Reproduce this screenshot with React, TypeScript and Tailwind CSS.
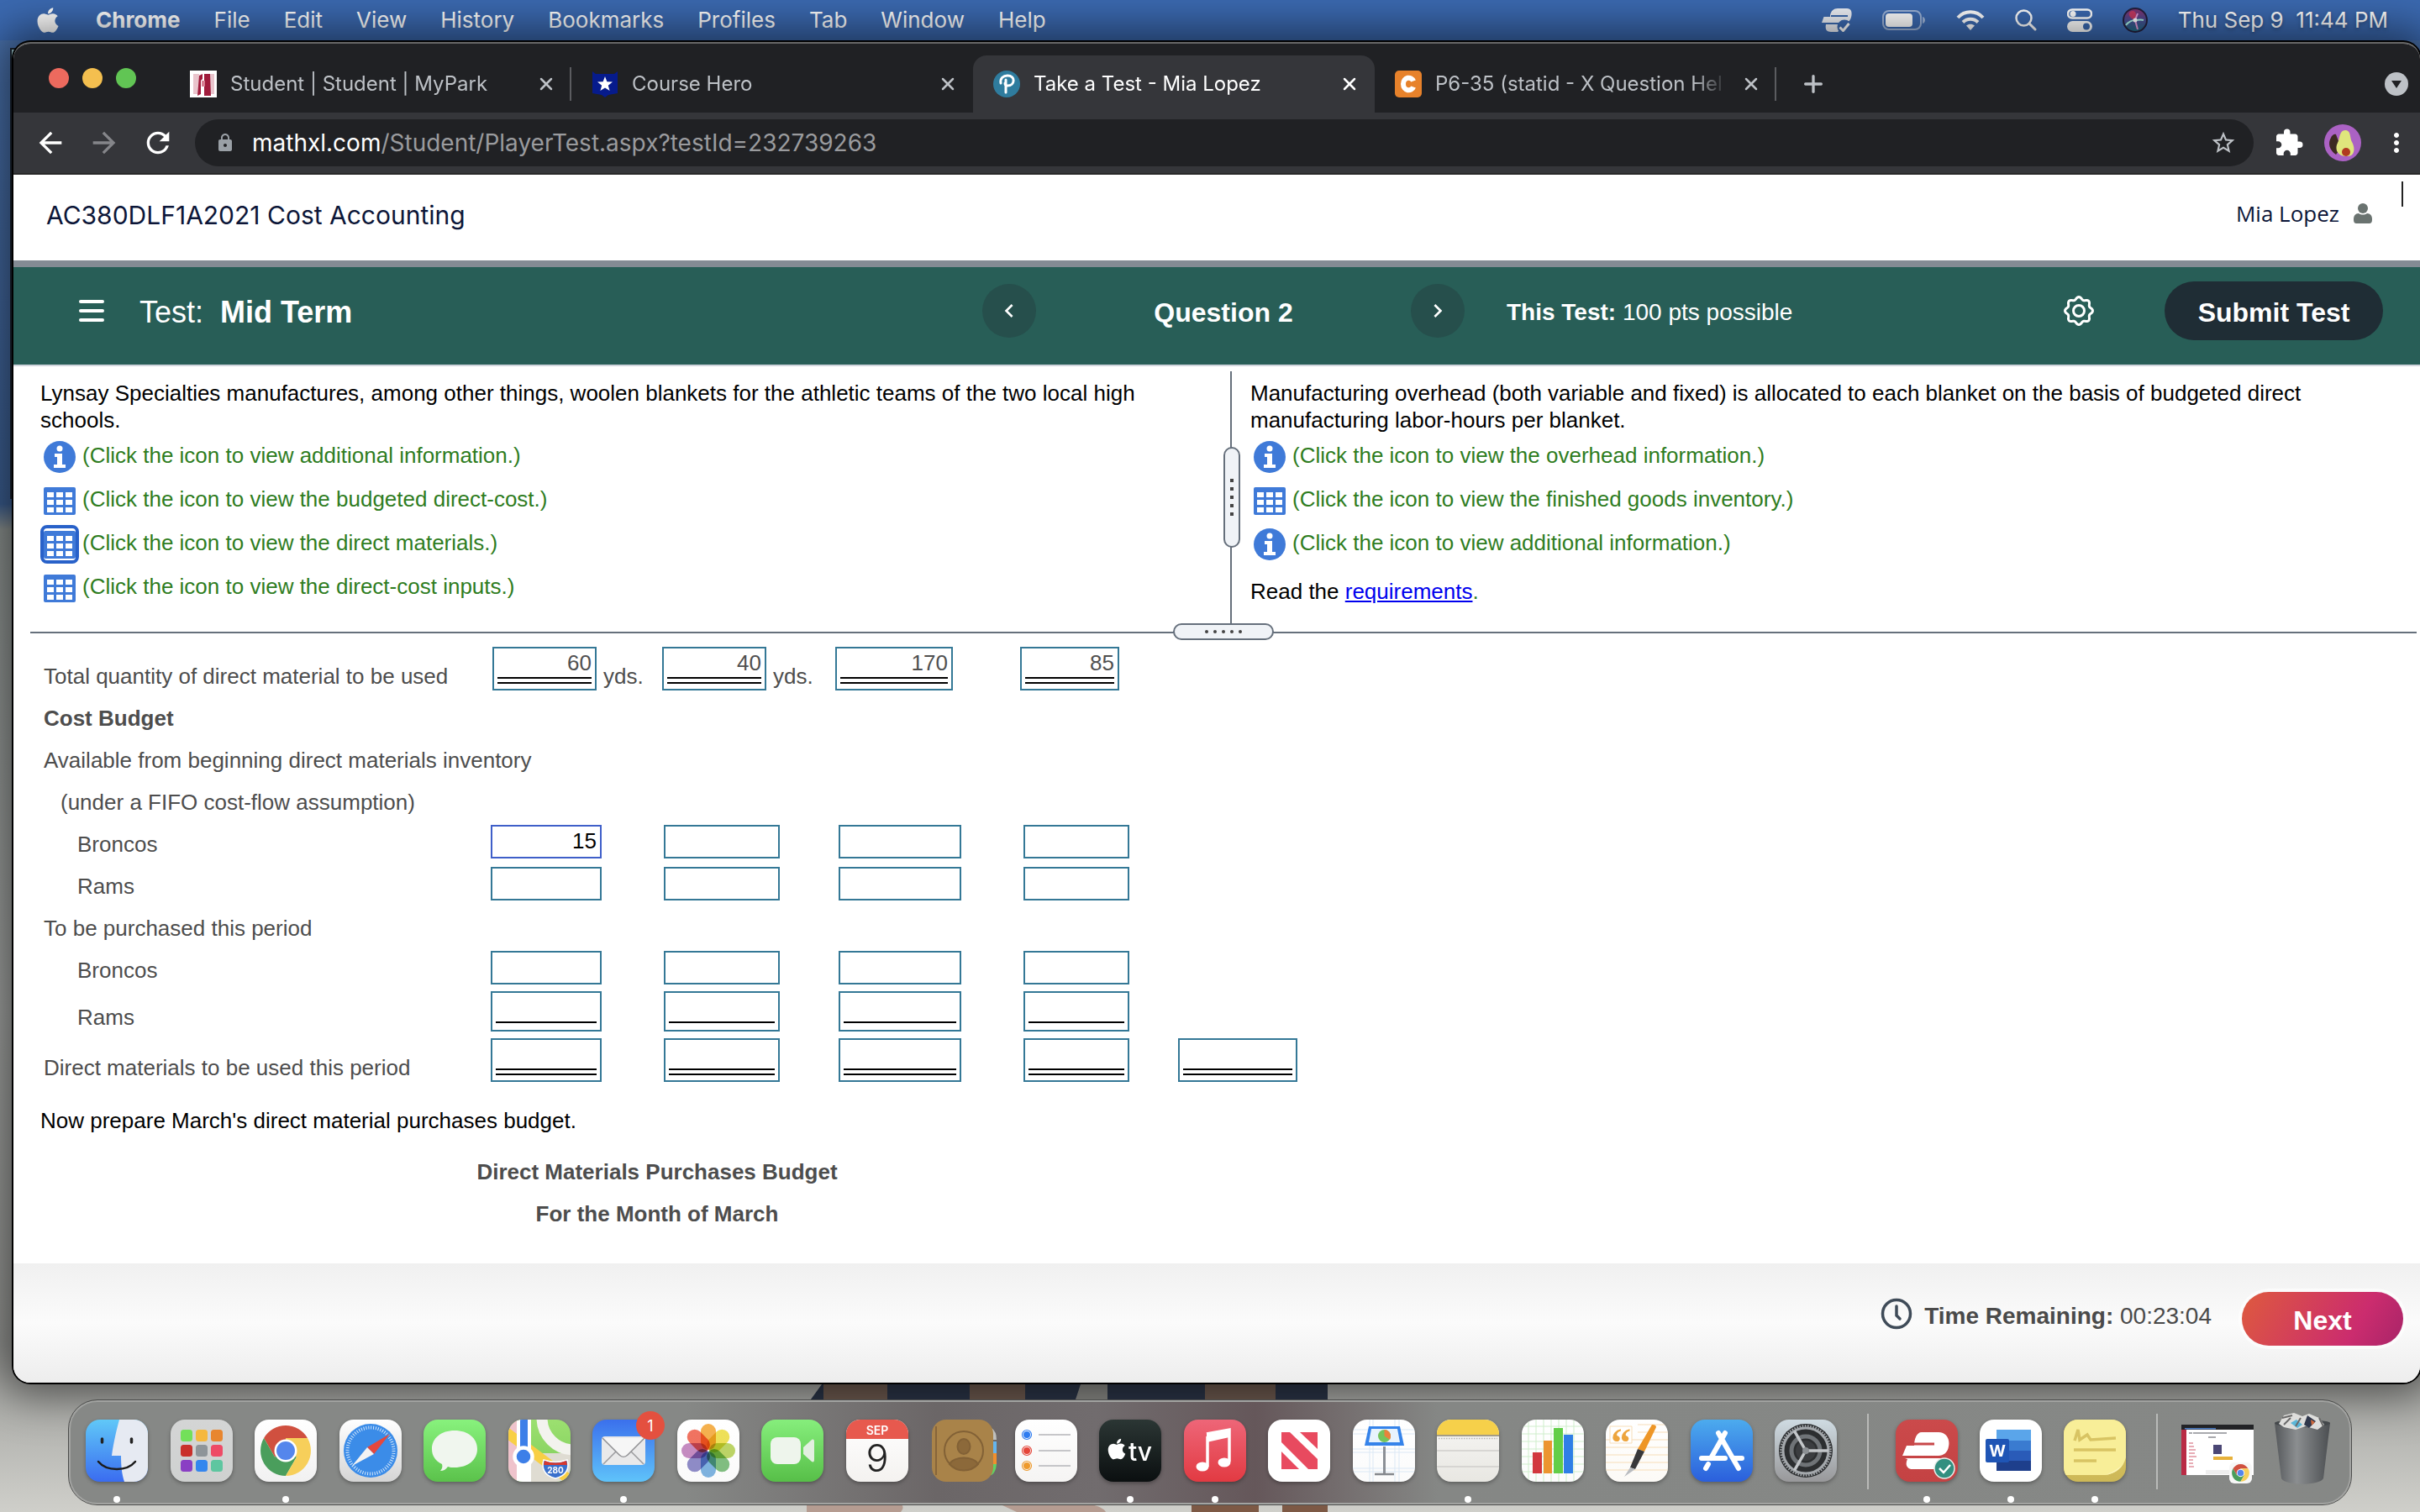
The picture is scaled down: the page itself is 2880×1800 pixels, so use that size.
import React from 'react';
import { X, Plus } from 'lucide-react';
import { FaApple } from 'react-icons/fa';
import {
  MdArrowBack,
  MdArrowForward,
  MdRefresh,
  MdLock,
  MdStarBorder,
  MdExtension,
  MdMoreVert,
  MdChevronLeft,
  MdChevronRight,
} from 'react-icons/md';

const menuItems = ['File', 'Edit', 'View', 'History', 'Bookmarks', 'Profiles', 'Tab', 'Window', 'Help'];

/* ---------- menu bar ---------- */

const MenuBar: React.FC = () => (
  <header className="relative flex h-12 items-center justify-between bg-[#3b69b0] pl-11 pr-[38px] font-[Inter,sans-serif] text-[26px] leading-8 text-white [text-shadow:0_2px_4px_rgba(0,0,0,0.3)]">
    <nav className="flex items-center gap-10">
      <FaApple className="mr-1 h-[34px] w-[26px]" />
      <button className="font-bold">Chrome</button>
      {menuItems.map((item) => (
        <button key={item}>{item}</button>
      ))}
    </nav>
    <div className="flex items-center gap-9">
      <svg className="h-7 w-9" viewBox="0 0 36 28" fill="#eef1f7">
        <path d="M10 8C11 3 14 0 19 0h11c5 0 6 4 5.500 8-.5 5-3 9-8.500 9H0l2.500-7H10z" />
        <path d="M5 19h22l-8 9h-8c-6 0-7-4-6-9z" />
        <path d="M11 9h20" stroke="#3b69b0" strokeWidth="2" />
        <circle cx="27" cy="22" r="8.500" fill="#3b69b0" />
        <path d="m21.500 22.500 4 4 7-8.500" fill="none" stroke="#fff" strokeWidth="3" />
      </svg>
      <svg className="h-6 w-[52px]" viewBox="0 0 52 24">
        <rect x="1" y="1" width="45" height="22" rx="7" fill="none" stroke="#fff" strokeOpacity=".5" strokeWidth="2" />
        <rect x="4" y="4" width="32" height="16" rx="4" fill="#fff" />
        <path d="M48 8c4 1 4 7 0 8z" fill="#fff" fillOpacity=".5" />
      </svg>
      <svg className="h-6 w-[34px]" viewBox="0 0 34 24" fill="none" stroke="#fff" strokeWidth="4">
        <path d="M2 9C10 0 24 0 32 9" />
        <path d="M8 14.500c5-5 13-5 18 0" />
        <path d="M17 24l-5-5.500c3-2.500 7-2.500 10 0z" fill="#fff" stroke="none" />
      </svg>
      <svg className="h-[26px] w-[26px]" viewBox="0 0 26 26" fill="none" stroke="#fff" strokeWidth="2.500" strokeLinecap="round">
        <circle cx="10.500" cy="10.500" r="9" />
        <path d="m17 17 7 7" strokeWidth="3" />
      </svg>
      <svg className="h-[28px] w-[30px]" viewBox="0 0 30 28">
        <rect x="1" y="1.500" width="28" height="10" rx="5" fill="none" stroke="#fff" strokeWidth="2.500" />
        <circle cx="7" cy="6.500" r="3.500" fill="#fff" />
        <rect x="0" y="15" width="30" height="13" rx="6.500" fill="#fff" />
        <circle cx="23" cy="21.500" r="4" fill="#3b69b0" />
      </svg>
      <svg className="size-[30px]" viewBox="0 0 30 30">
        <defs>
          <linearGradient id="siri" x2="0" y2="1">
            <stop stopColor="#8a2f6b" />
            <stop offset=".5" stopColor="#4a4c94" />
            <stop offset="1" stopColor="#1e6f86" />
          </linearGradient>
        </defs>
        <circle cx="15" cy="15" r="14" fill="url(#siri)" stroke="#241f3d" strokeWidth="2" />
        <path d="M15 15C8 12 6 8 9 5c6-3 9 2 6 10Z" fill="#c23a62" />
        <path d="M4 21c3-4 8-6 11-6s7-1 10 0" stroke="#a9f3e4" strokeWidth="2" fill="none" />
        <path d="m15 15 3-8M15 15l3 11" stroke="#e79bd8" strokeWidth="2" />
        <circle cx="15" cy="15" r="2.500" fill="#fff" />
      </svg>
      <span className="whitespace-pre">Thu Sep 9  11:44 PM</span>
    </div>
  </header>
);

/* ---------- browser chrome ---------- */

type Tab = { title: string; icon: React.ReactNode; active?: boolean; divider?: boolean };

const tabs: Tab[] = [
  {
    title: 'Student | Student | MyPark',
    divider: true,
    icon: (
      <svg className="size-8" viewBox="0 0 32 32">
        <path fill="#fff" d="M0 0h32v32H0z" />
        <path fill="#e9c4cc" d="M4 4h7v24H4zM24 4h5v24h-5z" />
        <path fill="#a01c3c" d="M17 4h7l1 26h-8zM11 6l4-2v6l-2 2v16l-4 2z" />
        <path fill="#d77f92" d="M14 12h4v7h-4z" />
      </svg>
    ),
  },
  {
    title: 'Course Hero',
    icon: (
      <svg className="size-8" viewBox="0 0 32 32">
        <path fill="#061b8c" d="M1 1l4 3h22l4-3v26l-11 2-4 3-4-3-11-2z" />
        <path fill="#fff" d="m16 7 2.400 6.300 6.600.3-5.200 4.100 1.800 6.300-5.600-3.600-5.600 3.600 1.800-6.300L7 13.600l6.600-.3z" />
      </svg>
    ),
  },
  {
    title: 'Take a Test - Mia Lopez',
    active: true,
    icon: (
      <svg className="size-8" viewBox="0 0 32 32">
        <circle cx="16" cy="16" r="16" fill="#2f7c9e" />
        <path d="M9 15c-1-6 3-9 8-9 10 0 9 12 0 12-2 0-3-1-3-3M15 11v15" fill="none" stroke="#fff" strokeWidth="3" strokeLinecap="round" />
      </svg>
    ),
  },
  {
    title: 'P6-35 (statid - X Question Hel',
    divider: true,
    icon: (
      <svg className="size-8" viewBox="0 0 32 32">
        <rect width="32" height="32" rx="5" fill="#e7822b" />
        <path d="M22 12.500c-2-6-12-5-12 3.500s10 9.500 12 3.500" fill="none" stroke="#fff" strokeWidth="6" />
      </svg>
    ),
  },
];

const TabStrip: React.FC = () => (
  <div className="flex h-[82px] items-center bg-[#202124] pl-[42px] pr-3 font-[Inter,sans-serif]">
    <div className="mr-10 flex gap-4">
      <button aria-label="Close window" className="size-6 rounded-full bg-[#ed6a5e]" />
      <button aria-label="Minimize window" className="size-6 rounded-full bg-[#f4bf4f]" />
      <button aria-label="Zoom window" className="size-6 rounded-full bg-[#61c554]" />
    </div>
    {tabs.map((tab) => (
      <div
        key={tab.title}
        className={
          tab.active
            ? 'mt-3.5 flex h-[68px] max-w-[478px] flex-1 items-center gap-4 rounded-t-2xl bg-[#35363a] pl-6 pr-[18px] text-white'
            : 'relative mt-3.5 flex h-[68px] max-w-[478px] flex-1 items-center gap-4 pl-6 pr-[18px] text-[#bdc1c6]'
        }
      >
        <span className="shrink-0">{tab.icon}</span>
        <span className="flex-1 overflow-hidden whitespace-nowrap text-2xl [mask-image:linear-gradient(to_right,#000_88%,transparent)]">
          {tab.title}
        </span>
        <button aria-label={`Close ${tab.title}`}>
          <X className="size-6" strokeWidth={2.5} />
        </button>
        {tab.divider && <span className="absolute right-0 h-10 w-0.5 bg-[#5b5c60]" />}
      </div>
    ))}
    <button aria-label="New tab" className="ml-7 mt-3.5 text-[#bdc1c6]">
      <Plus className="size-8" strokeWidth={2.5} />
    </button>
    <button aria-label="Search tabs" className="ml-auto mt-3.5">
      <svg className="size-8" viewBox="0 0 32 32">
        <circle cx="16" cy="16" r="14" fill="#bdc1c6" />
        <path d="M10 12h12l-6 9z" fill="#202124" />
      </svg>
    </button>
  </div>
);

const Toolbar: React.FC = () => (
  <div className="flex h-[74px] items-center gap-6 border-b-2 border-[#282828] bg-[#35363a] pl-6 pr-2.5 font-[Inter,sans-serif] text-white">
    <button aria-label="Back"><MdArrowBack className="size-10" /></button>
    <button aria-label="Forward" className="text-[#85868a]"><MdArrowForward className="size-10" /></button>
    <button aria-label="Reload"><MdRefresh className="size-10" /></button>
    <div className="flex h-14 flex-1 items-center gap-5 rounded-full bg-[#202124] pl-6 pr-5">
      <MdLock className="size-6 text-[#9aa0a6]" />
      <a href="#url" className="flex-1 text-[28px] leading-9 text-[#9a9b9e]">
        <span className="text-white">mathxl.com</span>/Student/PlayerTest.aspx?testId=232739263
      </a>
      <button aria-label="Bookmark" className="text-[#bdc1c6]"><MdStarBorder className="size-8" /></button>
    </div>
    <button aria-label="Extensions"><MdExtension className="size-9" /></button>
    <button aria-label="Profile">
      <svg className="size-11" viewBox="0 0 44 44">
        <circle cx="22" cy="22" r="22" fill="#ab62c4" />
        <path d="M8 16c-4 6-2 15 6 20l6-8-6-16c-2-1-5 1-6 4z" fill="#3c2a22" />
        <path d="M25 7c7 0 5 8 8 14 4 7 4 18-7 17-10 0-14-8-10-16 3-6 2-15 9-15z" fill="#dfe67c" />
        <ellipse cx="26" cy="33" rx="5" ry="5" fill="#b03a1f" />
      </svg>
    </button>
    <button aria-label="More"><MdMoreVert className="size-9" /></button>
  </div>
);

/* ---------- course header ---------- */

const lobes = Array.from({ length: 97 }, (_, i) => {
  const a = (i / 96) * Math.PI * 2;
  const r = 15 + 1.5 * Math.cos(8 * a);
  return `${i ? 'L' : 'M'}${(18 + r * Math.cos(a)).toFixed(2)} ${(18 + r * Math.sin(a)).toFixed(2)}`;
}).join('');

const CourseHeader: React.FC = () => (
  <div className="flex h-[102px] justify-between pl-[39px] text-[#0c1638]">
    <h1 className="mt-7 font-[Inter,sans-serif] text-[30px] leading-10">AC380DLF1A2021 Cost Accounting</h1>
    <div className="flex gap-4">
      <span className="mt-[26px] font-['Open_Sans',sans-serif] text-[26px] leading-10">Mia Lopez</span>
      <svg className="mt-[34px] h-6 w-6" viewBox="0 0 24 24" fill="#6a7370">
        <ellipse cx="12" cy="6" rx="6" ry="6" />
        <path d="M7 12c3 2 7 2 10 0 4 0 6 3 6 7 0 4-1 5-4 5H5c-3 0-4-1-4-5s2-7 6-7z" />
      </svg>
      <span className="ml-[18px] mr-5 mt-2 h-[30px] w-0.5 bg-[#222]" />
    </div>
  </div>
);

const TestBar: React.FC = () => (
  <div className="grid h-[126px] grid-cols-[1fr_auto_1fr] items-center border-b-2 border-t-8 border-b-[#d0d5dc] border-t-[#848b94] bg-[#285e57] pb-2 pl-4 text-white">
    <div className="flex items-center pl-[62px]">
      <button aria-label="Menu" className="mb-1 flex w-[30px] flex-col gap-[7px]">
        <span className="h-1 rounded-sm bg-white" />
        <span className="h-1 rounded-sm bg-white" />
        <span className="h-1 rounded-sm bg-white" />
      </button>
      <h2 className="ml-[42px] whitespace-pre text-4xl">
        Test:  <b>Mid Term</b>
      </h2>
    </div>
    <div className="flex w-[574px] items-center justify-between pb-1">
      <button aria-label="Previous question" className="grid size-16 place-items-center rounded-full bg-[#264f4c]">
        <MdChevronLeft className="size-8" stroke="currentColor" />
      </button>
      <h3 className="pt-1 text-[32px] font-bold leading-9">Question 2</h3>
      <button aria-label="Next question" className="grid size-16 place-items-center rounded-full bg-[#264f4c]">
        <MdChevronRight className="size-8" stroke="currentColor" />
      </button>
    </div>
    <div className="flex items-center pb-1 pl-[50px] pr-11">
      <p className="flex-1 pt-1 text-[28px] leading-9"><b>This Test:</b> 100 pts possible</p>
      <button aria-label="Settings">
        <svg className="size-9" viewBox="0 0 36 36" fill="none" stroke="#fff" strokeWidth="3" strokeLinejoin="round">
          <path d={`${lobes}Z`} />
          <circle cx="18" cy="18" r="6.500" />
        </svg>
      </button>
      <button className="ml-[84px] h-[70px] w-[260px] rounded-full bg-[#1f2d35] pt-1 text-[32px] font-bold">Submit Test</button>
    </div>
  </div>
);

/* ---------- question ---------- */

const InfoIcon = () => (
  <svg className="h-[38px] w-[38px]" viewBox="0 0 38 38">
    <circle cx="19" cy="19" r="19" fill="#3f7ad8" />
    <circle cx="19" cy="9" r="3.500" fill="#fff" />
    <path d="M13 15h9v13h4v4H12v-4h4v-9h-3z" fill="#fff" />
  </svg>
);

const TableIcon = () => (
  <svg className="h-[33px] w-[38px]" viewBox="0 0 38 33">
    <rect width="38" height="33" rx="2" fill="#3f7ad8" />
    {[4, 15, 26].map((x) => [6, 15, 24].map((y) => <rect key={`${x}-${y}`} x={x} y={y} width="8" height="6" fill="#fff" />))}
  </svg>
);

type LinkItem = { kind: 'info' | 'table'; text: string; focused?: boolean };

const leftLinks: LinkItem[] = [
  { kind: 'info', text: '(Click the icon to view additional information.)' },
  { kind: 'table', text: '(Click the icon to view the budgeted direct-cost.)' },
  { kind: 'table', text: '(Click the icon to view the direct materials.)', focused: true },
  { kind: 'table', text: '(Click the icon to view the direct-cost inputs.)' },
];

const rightLinks: LinkItem[] = [
  { kind: 'info', text: '(Click the icon to view the overhead information.)' },
  { kind: 'table', text: '(Click the icon to view the finished goods inventory.)' },
  { kind: 'info', text: '(Click the icon to view additional information.)' },
];

const IconLinks: React.FC<{ items: LinkItem[] }> = ({ items }) => (
  <ul>
    {items.map((item) => (
      <li key={item.text} className="flex h-[52px] items-center text-[#2f7d1f]">
        <button
          aria-label={item.text}
          className={
            item.focused
              ? 'mr-1 grid size-[46px] place-items-center rounded-lg border-4 border-[#2861c9]'
              : 'mr-1 grid size-[46px] place-items-center'
          }
        >
          {item.kind === 'info' ? <InfoIcon /> : <TableIcon />}
        </button>
        <span className="pb-1">{item.text}</span>
      </li>
    ))}
  </ul>
);

const QuestionPanes: React.FC = () => (
  <section className="relative grid h-[316px] grid-cols-[1448fr_1416fr] text-[26px] leading-8 text-black">
    <div className="pl-8 pr-16 pt-4">
      <p className="mb-0.5">
        Lynsay Specialties manufactures, among other things, woolen blankets for the athletic teams of the two local high schools.
      </p>
      <IconLinks items={leftLinks} />
    </div>
    <div className="relative pl-6 pr-24 pt-4">
      <span className="absolute bottom-2.5 left-0 top-1.5 w-0.5 bg-[#66707c]" />
      <span className="absolute -left-2 top-24 flex h-[120px] w-5 flex-col items-center justify-center gap-1.5 rounded-full border-2 border-[#66707c] bg-[#f0f3f7]">
        {[0, 1, 2, 3, 4].map((n) => <i key={n} className="size-1 bg-[#444]" />)}
      </span>
      <p className="mb-0.5">
        Manufacturing overhead (both variable and fixed) is allocated to each blanket on the basis of budgeted direct manufacturing labor-hours per blanket.
      </p>
      <IconLinks items={rightLinks} />
      <p className="mt-3.5 text-[#2f7d1f]">
        <span className="text-black">Read the </span>
        <a href="#requirements" className="text-[#0000ee] underline">requirements</a>.
      </p>
    </div>
    <span className="absolute bottom-[-2px] left-5 right-1 h-0.5 bg-[#66707c]" />
    <span className="absolute -bottom-[10px] left-5 right-1 mx-auto flex h-5 w-[120px] items-center justify-center gap-1.5 rounded-[10px] border-2 border-[#66707c] bg-[#f0f3f7]">
      {[0, 1, 2, 3, 4].map((n) => <i key={n} className="size-1 rounded-full bg-[#444]" />)}
    </span>
  </section>
);

/* ---------- budget tables ---------- */

type BoxProps = { label: string; width: string; line?: 'single' | 'double'; value?: string; focused?: boolean };

const Box: React.FC<BoxProps> = ({ label, width, line, value, focused }) => (
  <span
    className={`${width} ${focused ? 'border-[#3f5fc9] text-black' : 'border-[#347896] text-[#505050]'} ${
      line === 'double' ? 'h-[52px]' : line === 'single' ? 'h-12' : 'mt-0.5 h-10'
    } inline-block border-2 bg-white align-top`}
  >
    <input
      aria-label={label}
      defaultValue={value}
      className={`${line ? 'h-[34px]' : 'h-[34px]'} block w-full bg-transparent pr-1 text-right outline-none`}
    />
    {line === 'single' && <span className="mx-1 block h-0.5 bg-black" />}
    {line === 'double' && <span className="mx-1 block h-2 border-y-2 border-black" />}
  </span>
);

const costWidths = ['w-[132px]', 'w-[138px]', 'w-[146px]', 'w-[126px]', 'w-[142px]'];

type Row = { label: string; indent?: string; bold?: boolean; boxes?: number; line?: 'single' | 'double'; first?: string };

const costRows: Row[] = [
  { label: 'Cost Budget', bold: true },
  { label: 'Available from beginning direct materials inventory' },
  { label: '(under a FIFO cost-flow assumption)', indent: 'pl-5' },
  { label: 'Broncos', indent: 'pl-10', boxes: 4, first: '15' },
  { label: 'Rams', indent: 'pl-10', boxes: 4 },
  { label: 'To be purchased this period' },
  { label: 'Broncos', indent: 'pl-10', boxes: 4 },
  { label: 'Rams', indent: 'pl-10', boxes: 4, line: 'single' },
  { label: 'Direct materials to be used this period', boxes: 5, line: 'double' },
];

const quantities = [
  { value: '60', width: 'w-[124px]', unit: 'yds.' },
  { value: '40', width: 'w-[124px]', unit: 'yds.' },
  { value: '170', width: 'w-[140px]', unit: '' },
  { value: '85', width: 'w-[118px]', unit: '' },
];

const BudgetTables: React.FC = () => (
  <section className="flex-1 pl-9 pt-[18px] text-[26px] leading-[50px] text-[#4d4d4d]">
    <table className="table-fixed">
      <colgroup>
        <col className="w-[534px]" />
        <col className="w-[202px]" />
        <col className="w-[206px]" />
        <col className="w-[220px]" />
        <col className="w-[142px]" />
      </colgroup>
      <tbody>
        <tr className="h-[60px]">
          <th className="text-left align-bottom font-normal">Total quantity of direct material to be used</th>
          {quantities.map((q) => (
            <td key={q.value} className="align-top">
              <span className="flex gap-2">
                <Box label={`Total quantity ${q.value}`} width={q.width} line="double" value={q.value} />
                {q.unit && <span className="pt-2.5">{q.unit}</span>}
              </span>
            </td>
          ))}
        </tr>
      </tbody>
    </table>
    <table className="table-fixed">
      <colgroup>
        <col className="w-[532px]" />
        <col className="w-[206px]" />
        <col className="w-[208px]" />
        <col className="w-[220px]" />
        <col className="w-[184px]" />
        <col className="w-[142px]" />
      </colgroup>
      <tbody>
        {costRows.map((row, i) => (
          <tr key={i} className={row.line === 'double' ? 'h-[60px]' : row.line === 'single' ? 'h-14' : 'h-[50px]'}>
            <th
              colSpan={row.boxes ? 1 : 6}
              className={`${row.indent ?? ''} ${row.bold ? 'font-bold' : 'font-normal'} whitespace-nowrap text-left align-bottom`}
            >
              {row.label}
            </th>
            {Array.from({ length: row.boxes ?? 0 }, (_, c) => (
              <td key={c} className="align-top">
                <span className="flex">
                  <Box
                    label={`${row.label} ${c + 1}`}
                    width={costWidths[c]}
                    line={row.line}
                    value={c === 0 ? row.first : undefined}
                    focused={c === 0 && !!row.first}
                  />
                </span>
              </td>
            ))}
          </tr>
        ))}
      </tbody>
    </table>
    <p className="-ml-1 mt-[22px] leading-8 text-black">Now prepare March's direct material purchases budget.</p>
    <div className="mt-5 max-w-[1460px] text-center font-bold">
      <p>Direct Materials Purchases Budget</p>
      <p>For the Month of March</p>
    </div>
  </section>
);

const TestFooter: React.FC = () => (
  <footer className="flex h-[142px] items-center justify-end bg-linear-to-b from-[#f0f0f0] via-[#fbfbfb] to-[#ededed] pb-2.5 pr-5 text-[28px] text-[#4a4a4a]">
    <svg className="mb-3 mr-3.5 size-[38px]" viewBox="0 0 38 38" fill="none" stroke="#3f4b58" strokeWidth="3.500" strokeLinecap="round">
      <circle cx="19" cy="19" r="16.500" />
      <path d="M19 10v11l4 4" />
    </svg>
    <p className="mb-1.5"><b>Time Remaining:</b> 00:23:04</p>
    <button className="ml-9 h-16 w-48 rounded-full bg-linear-[120deg,#de5a3e,#cb2c6e_70%,#a82468] pt-1 text-[32px] font-bold text-white ring-4 ring-white/60">
      Next
    </button>
  </footer>
);

/* ---------- dock ---------- */

const Tile: React.FC<{ from: string; to: string; id: string; children?: React.ReactNode }> = ({ from, to, id, children }) => (
  <svg className="size-[74px] drop-shadow-[0_2px_2px_rgba(0,0,0,0.3)]" viewBox="0 0 74 74">
    <defs>
      <linearGradient id={`${id}-bg`} x2="0" y2="1">
        <stop stopColor={from} />
        <stop offset="1" stopColor={to} />
      </linearGradient>
      <clipPath id={`${id}-clip`}>
        <rect width="74" height="74" rx="17" />
      </clipPath>
    </defs>
    <g clipPath={`url(#${id}-clip)`}>
      <rect width="74" height="74" fill={`url(#${id}-bg)`} />
      {children}
    </g>
  </svg>
);

const ChromeMark: React.FC = () => (
  <>
    {[['#d0503f', 0], ['#4a9e5c', -120], ['#f7cf5a', 120]].map(([fill, turn]) => (
      <path key={fill} fill={fill as string} transform={`rotate(${turn} 24 24)`} d="M24 14H41.300A20 20 0 0 0 6.700 14L15.300 29 24 24Z" />
    ))}
    <circle cx="24" cy="24" r="9" fill="#fff" />
    <circle cx="24" cy="24" r="7.300" fill="#5586ec" />
  </>
);

const petals = ['#f3a32f', '#ecdc3c', '#b3cf4c', '#6cb56c', '#6aa8dd', '#7d79c0', '#bd79b8', '#ee5a45'];

const rulings = (color: string) => (
  <g stroke={color} strokeWidth="1">
    {[8, 17, 26, 35, 44, 53, 62].map((n) => <path key={n} d={`M0 ${n}H74M${n} 0V74`} />)}
  </g>
);

type DockApp = { name: string; icon: React.ReactNode; running?: boolean; badge?: string };

const dockApps: DockApp[] = [
  {
    name: 'Finder',
    running: true,
    icon: (
      <Tile id="finder" from="#60c8f8" to="#3a6cf0">
        <path d="M40 0C35 18 32 34 31 43h11c0 12 1 22 4 31h28V0z" fill="#e6eaf2" />
        <path d="M19.500 23v4M54.500 23v4" stroke="#222" strokeWidth="3.500" strokeLinecap="round" />
        <path d="M15 50c10 12 34 12 44 0" fill="none" stroke="#1b1b1b" strokeWidth="2.500" strokeLinecap="round" />
      </Tile>
    ),
  },
  {
    name: 'Launchpad',
    icon: (
      <Tile id="launchpad" from="#d4d5d5" to="#cfd1d0">
        {['#73e05a', '#f5b83d', '#e8862f', '#c9302a', '#8e9599', '#ee4b66', '#8a3fc4', '#3486ee', '#5ec6a0'].map((c, i) => (
          <rect key={c} x={12 + (i % 3) * 18} y={12 + Math.floor(i / 3) * 18} width="14" height="14" rx="3.500" fill={c} />
        ))}
      </Tile>
    ),
  },
  {
    name: 'Google Chrome',
    running: true,
    icon: (
      <Tile id="chrome" from="#ffffff" to="#f1f1f1">
        <g transform="translate(1 1) scale(1.5)"><ChromeMark /></g>
      </Tile>
    ),
  },
  {
    name: 'Safari',
    icon: (
      <Tile id="safari" from="#ffffff" to="#d5d5d5">
        <circle cx="37" cy="37" r="32" fill="#3b8ce8" />
        <circle cx="37" cy="37" r="27.500" fill="none" stroke="#d5e8fb" strokeWidth="4" strokeDasharray="1 1.880" />
        <path d="M60 17 41 41l-8-8z" fill="#e5473c" />
        <path d="M15 55 33 33l8 8z" fill="#f3f3f3" />
      </Tile>
    ),
  },
  {
    name: 'Messages',
    icon: (
      <Tile id="messages" from="#88f27d" to="#5bc24b">
        <path d="M37 13c16 0 27 9 27 22S53 57 37 57c-3 0-6 0-8-1-2 3-5 5-9 5 2-2 3-5 2-8-8-4-12-10-12-18 0-13 11-22 27-22z" fill="#f0f6ee" />
      </Tile>
    ),
  },
  {
    name: 'Maps',
    icon: (
      <Tile id="maps" from="#9ce070" to="#7ccb58">
        <path d="M0 0h12v74H0z" fill="#efc3cc" />
        <path d="M26 40h48v34H26z" fill="#dfdcd2" />
        <path d="M40-2a38 38 0 0 0 38 38" fill="none" stroke="#f3f3ee" strokeWidth="13" />
        <path d="M-4 14 76 74" stroke="#f8cf45" strokeWidth="12" />
        <path d="M10 0h17v74H10z" fill="#fff" />
        <path d="M14 0h9v40h-9z" fill="#3d7fe8" />
        <circle cx="18" cy="44" r="10.500" fill="#3d7fe8" stroke="#fff" strokeWidth="4.500" />
        <path d="M42 48q14 5 28 0c3 10-1 19-14 22-13-3-17-12-14-22z" fill="#3a70cc" stroke="#fff" strokeWidth="1.500" />
        <path d="M43 49q13 5 26 0l1 5H42z" fill="#d7382f" />
        <text x="56" y="64" fontSize="10" fontWeight="700" fill="#fff" textAnchor="middle" fontFamily="Inter">280</text>
      </Tile>
    ),
  },
  {
    name: 'Mail',
    running: true,
    badge: '1',
    icon: (
      <Tile id="mail" from="#3b70ec" to="#5fc3fa">
        <rect x="11" y="20" width="52" height="34" rx="4" fill="#e9e9ea" />
        <path d="m13 53 18-18M61 53 43 35" stroke="#9a9a9d" strokeWidth="1.500" />
        <path d="m12 22 20 20c3 3 7 3 10 0l20-20" fill="#f6f6f6" stroke="#8f8f92" strokeWidth="1.500" />
      </Tile>
    ),
  },
  {
    name: 'Photos',
    icon: (
      <Tile id="photos" from="#ffffff" to="#fafafa">
        {petals.map((c, i) => (
          <rect key={c} x="28" y="5" width="18" height="31" rx="9" fill={c} fillOpacity=".85" className="mix-blend-multiply" transform={`rotate(${i * 45} 37 37)`} />
        ))}
      </Tile>
    ),
  },
  {
    name: 'FaceTime',
    icon: (
      <Tile id="facetime" from="#86ee7c" to="#57bf48">
        <rect x="11" y="21" width="36" height="32" rx="8" fill="#eef5ec" />
        <path d="m50 33 10-9c2-1 3 0 3 2v22c0 2-1 3-3 2l-10-9z" fill="#e2efe0" />
      </Tile>
    ),
  },
  {
    name: 'Calendar',
    icon: (
      <Tile id="calendar" from="#ffffff" to="#f4f2f0">
        <path d="M0 0h74v23H0z" fill="#e7594e" />
        <text x="37" y="18" fontSize="14" fontWeight="600" fill="#fff" textAnchor="middle" fontFamily="Inter">SEP</text>
        <text x="37" y="62" fontSize="45" fontWeight="300" fill="#222" textAnchor="middle" fontFamily="Inter">9</text>
      </Tile>
    ),
  },
  {
    name: 'Contacts',
    icon: (
      <svg className="size-[74px] overflow-visible" viewBox="0 0 74 74">
        <path d="M68 10h5q6 4 6 14H68z" fill="#bfc0bd" />
        <path d="M68 26h11v14H68z" fill="#64b5ee" />
        <path d="M68 40h11v13H68z" fill="#f08f2e" />
        <path d="M68 53h11q-1 10-6 13h-5z" fill="#62d263" />
        <rect x="2" width="73" height="74" rx="17" fill="#a98349" />
        <path d="M7 8v58" stroke="#87653a" strokeWidth="2" />
        <g fill="none" stroke="#826136" strokeWidth="2">
          <circle cx="40" cy="37" r="23" />
          <path d="M23 53c5-10 29-10 34 0a23 23 0 0 1-34 0z" fill="#8c693a" />
          <ellipse cx="40" cy="32" rx="7.500" ry="9" fill="#8c693a" />
        </g>
      </svg>
    ),
  },
  {
    name: 'Reminders',
    icon: (
      <Tile id="reminders" from="#ffffff" to="#f5f4f3">
        {[['#2f7cf0', 18], ['#e5463a', 37], ['#ee9a2d', 55]].map(([c, y]) => (
          <g key={c}>
            <circle cx="14" cy={y} r="5.500" fill="none" stroke={c as string} strokeWidth="1.200" />
            <circle cx="14" cy={y} r="4" fill={c as string} />
            <path d={`M28 ${y}h38`} stroke="#b5b5b8" strokeWidth="1.500" />
          </g>
        ))}
      </Tile>
    ),
  },
  {
    name: 'TV',
    running: true,
    icon: (
      <Tile id="tv" from="#2b3634" to="#0b0f10">
        <FaApple x={7} y={21} size={28} color="#fff" />
        <text x="49" y="49" fontSize="30" fontWeight="500" fill="#fff" textAnchor="middle" fontFamily="Inter">tv</text>
      </Tile>
    ),
  },
  {
    name: 'Music',
    running: true,
    icon: (
      <Tile id="music" from="#ee6678" to="#e23a42">
        <path d="M27 17 54 12v38M28 20v36" fill="none" stroke="#fff" strokeWidth="3.500" />
        <path d="m27 17 27-5v9l-27 6z" fill="#fff" />
        <ellipse cx="22" cy="56" rx="7.500" ry="5.500" fill="#fff" />
        <ellipse cx="48" cy="51" rx="7.500" ry="5.500" fill="#fff" />
      </Tile>
    ),
  },
  {
    name: 'News',
    icon: (
      <Tile id="news" from="#ffffff" to="#ffffff">
        <path d="M16 15h10l33 32v12H48L16 27z" fill="#e84a5f" />
        <path d="M38 15h21v20zM16 38v21h21z" fill="#e84a5f" />
      </Tile>
    ),
  },
  {
    name: 'Keynote',
    icon: (
      <Tile id="keynote" from="#ffffff" to="#fbfbfb">
        <path d="M0 12h74M0 17h74M20 0v74M24 0v74M50 0v74M55 0v74M0 35h74M0 39h74M0 58h74M0 62h74" stroke="#dbe8f5" />
        <path d="M19 8h37l5 23H14z" fill="#3583ea" />
        <path d="M22 11h31l3 16H19z" fill="#e8f3fd" />
        <circle cx="37.500" cy="19.500" r="7.500" fill="#74c45c" />
        <path d="M37.500 12v7.500L44 24c3-6-1-12-6.500-12z" fill="#e8823c" />
        <path d="M37.500 32v32" stroke="#8c9096" strokeWidth="3" />
        <path d="M26 65h23" stroke="#85888d" strokeWidth="2.500" />
      </Tile>
    ),
  },
  {
    name: 'Notes',
    running: true,
    icon: (
      <Tile id="notes" from="#f7f6f4" to="#e8e7e2">
        <path d="M0 0h74v18H0z" fill="#f6d04a" />
        <path d="M0 19h74" stroke="#a49d86" strokeWidth="2" />
        <path d="M2 22.500h70" stroke="#b9b7b2" strokeWidth="1.500" strokeDasharray="1.500 1.500" />
        <path d="M0 37h74M0 56h74" stroke="#cfcecb" strokeWidth="1.500" />
      </Tile>
    ),
  },
  {
    name: 'Numbers',
    icon: (
      <Tile id="numbers" from="#ffffff" to="#fcfcfc">
        {rulings('#cfeecb')}
        <path d="M13 39h11v25H13z" fill="#d2383f" />
        <path d="M26 25h10v39H26z" fill="#ec9530" />
        <path d="M38 10h11v54H38z" fill="#62ce48" />
        <path d="M50 18h11v46H50z" fill="#2f7fe6" />
      </Tile>
    ),
  },
  {
    name: 'Pages',
    icon: (
      <Tile id="pages" from="#ffffff" to="#fcfaf6">
        <path d="M0 24h74M0 33h74M0 42h74M0 51h74M0 60h74M38 6h36M38 15h36" stroke="#f7ddb8" strokeWidth="1" />
        <path d="M5 8h26v20H5z" fill="#fff" stroke="#f7ddb8" />
        <text x="18" y="44" fontSize="48" fontWeight="700" fill="#eda53e" textAnchor="middle" fontFamily="Liberation Serif">“</text>
        <path d="M55 6q5 0 5 3L46 38l-8-3z" fill="#ee9626" />
        <path d="M38 35l8 3-11 21-6-2z" fill="#38383a" />
        <path d="m29 57 6 2-13 9z" fill="#b9bcc0" />
      </Tile>
    ),
  },
  {
    name: 'App Store',
    icon: (
      <Tile id="appstore" from="#4cabee" to="#2b5fdc">
        <path d="M41 16 24 46M33 16l24 42M21 53l-3 5M13 46h28M51 46h10" stroke="#fff" strokeWidth="6" strokeLinecap="round" />
      </Tile>
    ),
  },
  {
    name: 'System Preferences',
    icon: (
      <Tile id="settings" from="#cfdbe2" to="#98989a">
        <circle cx="37" cy="37" r="32" fill="#2c2e30" />
        <circle cx="37" cy="37" r="27" fill="none" stroke="#a4a8ac" strokeWidth="3" />
        <circle cx="37" cy="37" r="29.500" fill="none" stroke="#a4a8ac" strokeWidth="2.500" strokeDasharray="1.600 1.600" />
        <circle cx="37" cy="37" r="17" fill="none" stroke="#6f7377" strokeWidth="5" />
        <circle cx="37" cy="37" r="12" fill="#3b3d40" />
        <path d="M37 37h27M37 37 23.500 13.600M37 37 23.500 60.400" stroke="#c3c6c9" strokeWidth="3.500" />
        <circle cx="37" cy="37" r="4" fill="#8c9094" />
      </Tile>
    ),
  },
];

const recentApps: DockApp[] = [
  {
    name: 'Expressions',
    running: true,
    icon: (
      <Tile id="recent" from="#cb4a4b" to="#c44243">
        <path d="M31 15h20c9 0 14 8 12 17-1 7-6 11-12 11H8l5-12h9c0-8 3-16 9-16z" fill="#fff" />
        <path d="M11 46h50c-1 8-5 13-13 13H20c-7 0-9-6-6-12z" fill="#fff" />
        <path d="M22 29h24" stroke="#c8484a" strokeWidth="3" />
        <circle cx="58" cy="58" r="12" fill="#338f80" stroke="#e8eeea" strokeWidth="1.500" />
        <path d="m52 58 5 5 8-9" fill="none" stroke="#fff" strokeWidth="2.500" />
      </Tile>
    ),
  },
  {
    name: 'Microsoft Word',
    running: true,
    icon: (
      <Tile id="word" from="#ffffff" to="#ffffff">
        <path d="M20 12h41v13H20z" fill="#5aa5ea" />
        <path d="M20 25h41v12H20z" fill="#3a7bd0" />
        <path d="M20 37h41v12H20z" fill="#2a5bb8" />
        <path d="M20 49h41v12H20z" fill="#1e3f8c" />
        <rect x="7" y="23" width="28" height="28" rx="2" fill="#1f55b5" />
        <text x="21" y="44" fontSize="19" fontWeight="700" fill="#fff" textAnchor="middle" fontFamily="Inter">W</text>
      </Tile>
    ),
  },
  {
    name: 'Stickies',
    running: true,
    icon: (
      <Tile id="stickies" from="#d9c564" to="#cdb857">
        <path d="M0 0h74v45c-3 12-12 19-24 21H0z" fill="#f8ee98" />
        <path d="M74 45c-3 12-12 19-24 21 10-5 22-10 24-21z" fill="#fbf4b5" />
        <path d="M13 25 17 12l2 12 9-6 4 6 30-2M12 36h50M12 49h27" fill="none" stroke="#d8c463" strokeWidth="3.500" />
      </Tile>
    ),
  },
];

const DockItem: React.FC<{ app: DockApp }> = ({ app }) => (
  <button aria-label={app.name} className="relative size-[74px] shrink-0">
    {app.icon}
    {app.badge && (
      <span className="absolute -right-3 -top-2.5 grid size-[34px] place-items-center rounded-full bg-[#e4503f] font-[Inter,sans-serif] text-[18px] text-white">
        {app.badge}
      </span>
    )}
    {app.running && <span className="absolute -bottom-[25px] left-[33px] size-2 rounded-full bg-white" />}
  </button>
);

const Thumbnail: React.FC = () => (
  <svg className="h-[70px] w-[86px]" viewBox="0 0 86 70">
    <path d="M0 0h86v60H0z" fill="#fff" />
    <path d="M0 0h86v6H0z" fill="#222326" />
    <path d="M4 4h37v1.500H4z" fill="#4f80c8" />
    <path d="M0 6h6v54H0z" fill="#b92b45" />
    <path d="M9 10h4M14 10h40M32 15h9" stroke="#8d8f94" strokeWidth="1.500" />
    <path d="M9 22h5M9 26h6M9 30h8M9 34h7M9 38h9M9 42h5M9 46h5M9 50h6" stroke="#d05a6c" />
    <path d="M29 54h34v5H29z" fill="#eee" />
    <path d="M38 24h10v11H38z" fill="#4b4775" />
    <path d="M38 38h23v4H38z" fill="#e7b13a" />
    <rect x="57" y="45" width="27" height="25" rx="6" fill="#f7f7f7" />
    <g transform="translate(58 45) scale(.52)"><ChromeMark /></g>
  </svg>
);

const Trash: React.FC = () => (
  <svg className="h-[86px] w-[68px]" viewBox="0 0 68 86">
    <defs>
      <linearGradient id="bin">
        <stop stopColor="#55585b" />
        <stop offset=".4" stopColor="#8b8e90" />
        <stop offset="1" stopColor="#4b4e51" />
      </linearGradient>
    </defs>
    <path d="M1 12h66l-8 66c-4 9-46 9-50 0z" fill="url(#bin)" />
    <path d="M1 12c2-5 64-5 66 0-2 7-64 7-66 0z" fill="#44484b" />
    <path d="M6 13 12 3l12-3 10 4 8-3 12 5 6 8-8 6-14-4-12 4-14-3z" fill="#dededc" />
    <path d="m20 12 7-4 7 6-6 4z" fill="#5bb6d8" />
    <path d="m40 3 10 7-8 8-6-4z" fill="#30384c" />
    <path d="m44 8 5 3-4 4z" fill="#d06a3c" />
    <path d="m10 6 12-3M54 6l5 10M26 16l6-10M12 14l8-8" stroke="#6a6a6a" strokeWidth="2" />
  </svg>
);

const Dock: React.FC = () => (
  <div className="relative mb-[9px] ml-[82px] mr-[82px] mt-[21px] flex h-[124px] items-center rounded-[34px] border-2 border-[#a2a3a1] bg-[linear-gradient(90deg,#868886_0%,#868886_27%,#6b6667_38%,#716c6e_45%,#65575a_52%,#858785_60%,#868886_100%)] pb-2 pl-[18px] pr-[22px] outline outline-1 outline-[#4c4d4c]">
    <div className="mt-1 flex flex-1 justify-between">
      {dockApps.map((app) => <DockItem key={app.name} app={app} />)}
    </div>
    <span className="ml-9 mr-8 mt-1.5 h-[90px] w-0.5 bg-[#b9bab8]" />
    <div className="mt-1 flex gap-[26px]">
      {recentApps.map((app) => <DockItem key={app.name} app={app} />)}
    </div>
    <span className="ml-9 mr-7 mt-1.5 h-[90px] w-0.5 bg-[#b9bab8]" />
    <button aria-label="Minimized window" className="mr-6 mt-3"><Thumbnail /></button>
    <button aria-label="Trash"><Trash /></button>
  </div>
);

const Wallpaper: React.FC = () => (
  <div aria-hidden="true" className="absolute inset-0 overflow-hidden bg-[linear-gradient(#4a72ad_0px,#3c5f92_600px,#8e9492_630px,#a6a8a6_1200px,#9a9b98_1600px,#cfcfca_1800px)]">
    <svg className="absolute bottom-0 left-1/3 h-40 w-[620px]" viewBox="0 0 620 160">
      <path d="M2 30 18 8h604v24H20z" fill="#2b3548" />
      <path d="M20 8h76v30H20zM194 8h66v30h-66zM474 8h84v30h-84z" fill="#6f5b50" />
      <path d="M326 8h32v30h-42z" fill="#8c8c88" />
      <path d="M0 148h110q8 6 2 12H0zM220 146c50-6 130 0 136 14H250z" fill="#b59c91" />
      <path d="M458 148h80v12h-80zM566 148h54v12h-54z" fill="#7d5945" />
    </svg>
    <div className="absolute left-3 top-[57px] h-[537px] w-8 border-2 border-[#1c2530] bg-[#9cc6cc]" />
  </div>
);

export default function App() {
  return (
    <div className="relative flex min-h-screen flex-col overflow-hidden font-['Liberation_Sans',Arial,sans-serif]">
      <Wallpaper />
      <MenuBar />
      <main className="relative ml-4 mt-0.5 flex flex-1 flex-col overflow-hidden rounded-[20px] border-t-2 border-[#676767] bg-white shadow-[0_0_0_2px_#000,0_0_50px_16px_rgba(0,0,0,0.5)]">
        <TabStrip />
        <Toolbar />
        <CourseHeader />
        <TestBar />
        <QuestionPanes />
        <BudgetTables />
        <TestFooter />
      </main>
      <Dock />
    </div>
  );
}
